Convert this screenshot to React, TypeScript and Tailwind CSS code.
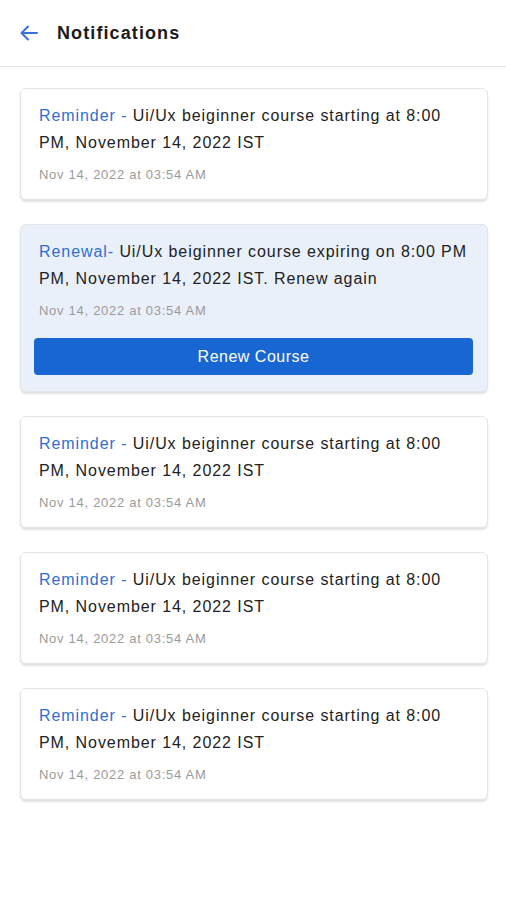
import React from "react";

type Note = {
  kind: "reminder" | "renewal";
};

const notes: Note[] = [
  { kind: "reminder" },
  { kind: "renewal" },
  { kind: "reminder" },
  { kind: "reminder" },
  { kind: "reminder" },
];

const NotificationCard = ({ note }: { note: Note }) => {
  const renewal = note.kind === "renewal";
  return (
    <div
      className={`rounded-md border border-[#e4e4e4] shadow-[0_2px_2px_rgba(0,0,0,0.12)] pl-[18px] pr-[10px] pt-[13px] ${
        renewal ? "bg-[#e9f0fa] pb-[16px]" : "bg-white pb-[15px]"
      }`}
    >
      <p className="text-[16px] leading-[27px] text-[#222] tracking-[0.058em]">
        {renewal ? (
          <>
            <span className="text-[#2f6fcf]">Renewal-</span> Ui/Ux beiginner
            course expiring on 8:00 PM PM, November 14, 2022 IST. Renew again
          </>
        ) : (
          <>
            <span className="text-[#2f6fcf]">Reminder -</span> Ui/Ux beiginner
            course starting at 8:00 PM, November 14, 2022 IST
          </>
        )}
      </p>
      <p className="mt-[10px] text-[13px] leading-[18px] text-[#9a9a9a] tracking-[0.055em]">
        Nov 14, 2022 at 03:54 AM
      </p>
      {renewal && (
        <button className="mt-[18px] -ml-[5px] w-[calc(100%+1px)] h-[37px] rounded-[4px] bg-[#1866d2] text-white text-[16px] tracking-[0.5px] font-medium">
          Renew Course
        </button>
      )}
    </div>
  );
};

export default function App() {
  return (
    <div className="min-h-[900px] bg-white font-['Liberation_Sans',Arial,sans-serif]">
      {/* Header */}
      <div className="h-[67px] flex items-center border-b border-[#e3e3e3] px-[19px]">
        <svg width="20" height="20" viewBox="0 0 20 20" fill="none" stroke="#3a70d8" strokeWidth="2" strokeLinecap="round" strokeLinejoin="round">
          <path d="M18 10H2.5M9 3.5L2.5 10L9 16.5" />
        </svg>
        <h1 className="ml-[18px] text-[18px] font-bold text-[#1b1b1b] tracking-[1.1px]">
          Notifications
        </h1>
      </div>

      {/* List */}
      <div className="flex flex-col gap-[24px] px-[20px] pt-[21px] pr-[18px]">
        {notes.map((note, i) => (
          <NotificationCard key={i} note={note} />
        ))}
      </div>
    </div>
  );
}
